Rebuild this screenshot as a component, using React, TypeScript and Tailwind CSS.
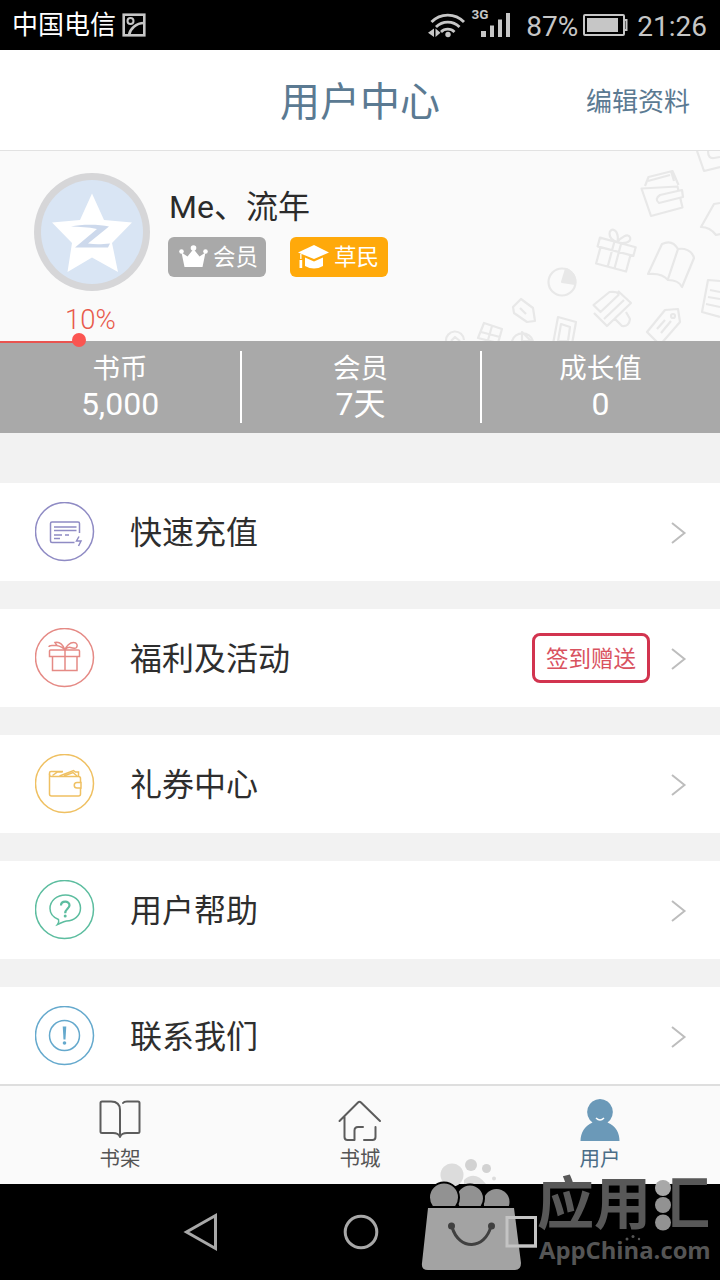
import type { ReactNode } from "react";

interface Stat {
  label: string;
  value: string;
}

interface MenuItem {
  title: string;
  icon: ReactNode;
  badge?: string;
}

const stats: Stat[] = [
  { label: "书币", value: "5,000" },
  { label: "会员", value: "7天" },
  { label: "成长值", value: "0" },
];

const CardIcon = () => (
  <svg width="60" height="60" viewBox="0 0 60 60" fill="none" stroke="#8f8bc4" strokeWidth="1.5">
    <circle cx="29.500" cy="29.500" r="29" />
    <path d="M44.500 31V21.500a1.500 1.500 0 0 0-1.500-1.500H17a1.500 1.500 0 0 0-1.500 1.500v17.500A1.500 1.500 0 0 0 17 40.500h22.500" />
    <path d="M19 25h22.500M19 28.500h22.500" />
    <path d="M19 33h8M30 33h4M19 36.500h6" strokeWidth="1.300" />
    <path d="M44 34.500l-2.500 4.500h4.500l-2.500 5" strokeWidth="1.500" />
  </svg>
);

const GiftIcon = () => (
  <svg width="60" height="60" viewBox="0 0 60 60" fill="none" stroke="#e58a85" strokeWidth="1.5">
    <circle cx="29.500" cy="29.500" r="29" />
    <path d="M15.500 22h28a1 1 0 0 1 1 1v5.500h-30V23a1 1 0 0 1 1-1zM17.500 28.500v14h24.500v-14M30 22v20.500" />
    <path d="M30 22c-2-5-5.500-8.500-10-7.500l2 3h-5c-2 0-3 .5-3 1.500M30 22c1-4 5-7.500 8.500-7.500 3.500 0 4.500 3 3 5-1.500 1.500-4.500.5-6 0-2-.5-4 .5-5.500 2.500M21.500 17.500c3 .5 6.500 2 8.500 4.500" />
  </svg>
);

const WalletIcon = () => (
  <svg width="60" height="60" viewBox="0 0 60 60" fill="none" stroke="#efc062" strokeWidth="1.5">
    <circle cx="29.500" cy="29.500" r="29" />
    <path d="M45.500 28.500V24.500a2 2 0 0 0-2-2H16.500a2 2 0 0 1-2-2V40a2 2 0 0 0 2 2h27a2 2 0 0 0 2-2v-6" />
    <path d="M46 28.500h-4a2.700 2.700 0 0 0 0 5.500h4zM14.500 21v-2a1.500 1.500 0 0 1 1.500-1.500h12M17.500 21.500l5-3.500h5M24.500 22l14-5.500 2 1.500h3v4M29 22l9-3.500 4 3.500" />
  </svg>
);

const HelpIcon = () => (
  <svg width="60" height="60" viewBox="0 0 60 60" fill="none" stroke="#5cbd9f" strokeWidth="1.5">
    <circle cx="29.500" cy="29.500" r="29" />
    <path d="M23.500 39.500c-5-2-8.500-5.500-8.500-11 0-8 7-13.500 15.500-13.500S45.500 20.500 45.500 28c0 8-6.500 12.500-14 13-3 .5-5.500 2-9 3.500 1.500-2 1.500-3.500 1-5z" />
    <path d="M26 25.500c0-5 8.500-5 8.500-.3 0 3.500-4.300 3.800-4.300 8" strokeWidth="2.200" />
    <circle cx="30.200" cy="36" r="1.500" fill="#5cbd9f" stroke="none" />
  </svg>
);

const ContactIcon = () => (
  <svg width="60" height="60" viewBox="0 0 60 60" fill="none" stroke="#65a9cd" strokeWidth="1.5">
    <circle cx="29.500" cy="29.500" r="29" />
    <circle cx="29.500" cy="29.500" r="15" />
    <path d="M27.700 20.500h3.600L30.500 33.500h-2z" fill="#65a9cd" stroke="none" />
    <circle cx="29.500" cy="37" r="1.800" fill="#65a9cd" stroke="none" />
  </svg>
);

const menu: MenuItem[] = [
  { title: "快速充值", icon: <CardIcon /> },
  { title: "福利及活动", icon: <GiftIcon />, badge: "签到赠送" },
  { title: "礼券中心", icon: <WalletIcon /> },
  { title: "用户帮助", icon: <HelpIcon /> },
  { title: "联系我们", icon: <ContactIcon /> },
];

const StatusBar = () => (
  <div className="flex h-[50px] shrink-0 items-center bg-black pl-3 pr-[13px] text-[28px] text-[#c6c6c6]">
    <span className="text-[26px] text-white">中国电信</span>
    <svg className="ml-[6px]" width="24" height="24" viewBox="0 0 24 24" fill="none" stroke="#c6c6c6" strokeWidth="2.600">
      <rect x="1.700" y="1.700" width="20.600" height="20.600" />
      <circle cx="8.500" cy="8" r="3" strokeWidth="2" />
      <path d="M7 22c1-6 7-12 15-12" />
    </svg>
    <div className="flex-1" />
    <svg width="84" height="40" viewBox="428 5 84 40" fill="none" stroke="#c6c6c6" strokeWidth="2.800">
      <path d="M431.500 22a22.500 22.500 0 0 1 32.500 0M436 27a16.500 16.500 0 0 1 23.500 0M441 32a9.500 9.500 0 0 1 13.500 0" />
      <circle cx="448" cy="34.500" r="2.700" fill="#c6c6c6" stroke="none" />
      <path d="M434 28.500v8.500l-6-4.250zM435.500 28.500v8.500l5-4.250z" fill="#c6c6c6" stroke="none" />
      <path d="M481 31h5v6h-5zM490 25.500h4v11.500h-4zM498 19.500h4V37h-4zM506 13h4v24h-4z" fill="#c6c6c6" stroke="none" />
      <text x="471.500" y="19" fontSize="13.500" fontWeight="700" fill="#c6c6c6" stroke="none">3G</text>
    </svg>
    <span className="ml-[14px] pt-[3px]">87%</span>
    <svg className="ml-[5px]" width="45" height="22" viewBox="0 0 45 22">
      <rect x="1" y="1" width="40" height="20" rx="1" fill="none" stroke="#c6c6c6" strokeWidth="2" />
      <rect x="4" y="4" width="31" height="14" fill="#c6c6c6" />
      <path d="M41 6h2.500v10H41" fill="none" stroke="#c6c6c6" strokeWidth="2" />
    </svg>
    <span className="ml-[9px] pt-[3px]">21:26</span>
  </div>
);

const Header = () => (
  <header className="grid h-[101px] shrink-0 grid-cols-3 items-center border-b border-[#e2e2e2] bg-white text-[#5b7a92]">
    <h1 className="col-start-2 pt-[6px] text-center text-[40px] leading-none">用户中心</h1>
    <button className="justify-self-end pr-[30px] pt-1 text-[26px] leading-none">编辑资料</button>
  </header>
);

// Faint scattered icons in the lower right corner of the profile area
const ProfilePattern = () => (
  <svg
    className="absolute right-0 top-0"
    width="290"
    height="190"
    viewBox="430 151 290 190"
    fill="none"
    stroke="#e8e8e8"
    strokeWidth="2.200"
    strokeLinejoin="round"
  >
    <path d="M697 151l7 20 16-4M708 151q0 8 6 7l6-1" />
    <path d="M641.500 188.500l9.500 27.500 31.500-8.500-5-21zM645 186l3.500-9 24-6 6 14M648 181l22-6M671 171l3 10" />
    <path d="M682 190l-22 5q-6 4-1 8l24-6z" fill="#fafafa" />
    <path d="M720 203l-6 1-13 23q9 0 15 8l4-1" />
    <g transform="rotate(15 615 251)">
      <path d="M597 242h37v9h-37zM600 251h31v17h-31zM612 242v26M619 242v26M615 242c-12-1-12-12-6-11 4 1 6 7 6 11 2-6 8-12 11-8 3 5-5 8-11 8" />
    </g>
    <path d="M662 244c6-3 12-2 16 5 6-1 14 1 16 9l-12 29c-3-6-8-7-14-7-4-5-10-7-20-6zM678 249l-10 30" />
    <circle cx="562" cy="282" r="13.500" />
    <path d="M562 282l4-13a13.500 13.500 0 0 1 9 15z" fill="#e8e8e8" />
    <path d="M720 281l-12-1-6 32 18 5M710 290l10 2M708 297l12 2M706 304l14 3" />
    <path d="M593.500 305l16-13q9-1 9 3l-18 17zM618 291l13 12-24 23-13-13M604 319l20-19M614 318l8 8q7 1 8-7l-4-7" />
    <path d="M678 309l2 13-20 23-13-13 18-22zM661 333l10-12M657 329l8-9" />
    <circle cx="673" cy="316" r="2" />
    <path d="M513 307l8-8 12 9 2 13-8 1-13-9zM520 308l6 6" />
    <path d="M558 317l18 5-4 22h-19zM561 324l9 3-2 14h-10z" />
    <path d="M484 323l18 6-4 14-20-5zM481 332l19 5M492 326l-4 14" />
    <path d="M446 341a9 9 0 0 1 18-1M451 341l4-4 5 4M512 341a11 11 0 0 1 21 0M522 332l9 9h-9z" />
  </svg>
);

const Avatar = () => (
  <svg className="mt-[22px] shrink-0" width="116" height="118" viewBox="34 173 116 118">
    <ellipse cx="92" cy="232" rx="58" ry="59" fill="#d6d6d8" />
    <ellipse cx="92" cy="232" rx="51" ry="52" fill="#d9e5f4" />
    <path
      d="M92 193.500l12 26.500 28 2.500-20 20.500 6 29-26-14.500L67.500 272l4.500-29-20-20.500 28-2.500z"
      fill="#fff"
      strokeLinejoin="round"
    />
    <path d="M71 226.500c10-2.500 28-2.500 38 0L88 243.500c7 1 13 1 22 0l-2 4H75l22-18.500c-9-2-17-2-26-2.500z" fill="#cdd9ec" />
  </svg>
);

const CrownIcon = () => (
  <svg width="29" height="24" viewBox="0 0 29 24" fill="#fff">
    <path d="M2.500 7.500l6 4L14.500 4l6 7.500 6-4L23.500 22h-18z" />
    <circle cx="2.500" cy="6.500" r="2.300" />
    <circle cx="14.500" cy="3" r="2.800" />
    <circle cx="26.500" cy="6.500" r="2.300" />
  </svg>
);

const CapIcon = () => (
  <svg width="31" height="24" viewBox="0 0 31 24" fill="#fff">
    <path d="M16 0l15 7.500L16 14 0 7.500z" />
    <path d="M7 12.500l9 4 9-4V21q-9 5-18 0zM2.200 9h1.300v5h-1.300zM1.500 15h2.700v8H1.500z" />
  </svg>
);

const Profile = () => (
  <section className="relative flex h-[190px] shrink-0 bg-[#fafafa] pl-[34px]">
    <ProfilePattern />
    <Avatar />
    <div className="ml-[18px] mt-[38px]">
      <div className="pl-px text-[32px] leading-[36px] text-[#2b2b2b]">Me、流年</div>
      <div className="mt-3 flex gap-6 text-[22.5px] leading-none text-white">
        <span className="flex h-10 w-[98px] items-center justify-end gap-[5px] rounded-md bg-[#a9a9a9] pr-2">
          <CrownIcon />
          会员
        </span>
        <span className="flex h-10 w-[98px] items-center justify-end gap-[5px] rounded-md bg-[#ffa90a] pr-[9px]">
          <CapIcon />
          草民
        </span>
      </div>
    </div>
    <span className="absolute left-[65px] top-[153px] text-[27.5px] font-light leading-[32px] text-[#e85a4c]">10%</span>
    <div className="absolute left-0 top-[190px] z-10 h-[2px] w-[79px] bg-[#ea5450]" />
    <div className="absolute left-[72px] top-[182px] z-10 size-[14px] rounded-full bg-[#fb5551]" />
  </section>
);

const StatsBar = () => (
  <section className="flex h-[92px] shrink-0 items-stretch bg-[#a9a9a9] py-[10px] text-white">
    {stats.map((stat, index) => (
      <div
        key={stat.label}
        className={`flex flex-col items-center pt-px ${index < 2 ? "border-r-2 border-white" : ""} ${
          index === 0 ? "w-[242px]" : index === 1 ? "w-[240px] pr-px" : "w-[238px] pr-px"
        }`}
      >
        <span className="text-[27.5px] leading-[34px]">{stat.label}</span>
        <span className="text-[32px] leading-[36px]">{stat.value}</span>
      </div>
    ))}
  </section>
);

const MenuRow = ({ item }: { item: MenuItem }) => (
  <div className="flex h-[98px] shrink-0 items-center bg-white pl-[35px] pr-[33px]">
    {item.icon}
    <span className="ml-[35px] flex-1 pt-[2px] text-[32px] leading-none text-[#2e2e2e]">{item.title}</span>
    {item.badge && (
      <span className="mr-5 flex h-[50px] w-[118px] items-center justify-center rounded-lg border-[3px] border-[#d2344f] pt-[2px] text-[22.5px] leading-none text-[#d9525f]">
        {item.badge}
      </span>
    )}
    <svg className="mt-[2px]" width="17" height="24" viewBox="0 0 17 24" fill="none" stroke="#bdbdbd" strokeWidth="2">
      <path d="M2 2l12.500 10L2 22" />
    </svg>
  </div>
);

const TabBar = () => (
  <nav className="grid h-[100px] shrink-0 grid-cols-3 border-t-2 border-[#dedede] bg-[#fafafa] pt-[13px] text-[20.5px] leading-none text-[#555]">
    <div className="flex flex-col items-center gap-2">
      <svg width="44" height="42" viewBox="98 1099 44 42" fill="none" stroke="#5c5c5c" strokeWidth="2" strokeLinecap="round" strokeLinejoin="round">
        <path d="M120 1137v-27c0-6-4-8.500-9-8.500h-9a1.500 1.500 0 0 0-1.500 1.500v28.500a1.500 1.500 0 0 0 1.500 1.500h11c4 0 6 1 7 4 1-3 3-4 7-4h11a1.500 1.500 0 0 0 1.500-1.500V1103a1.500 1.500 0 0 0-1.500-1.500h-11q-3 0-4 1.500" />
      </svg>
      书架
    </div>
    <div className="flex flex-col items-center gap-2">
      <svg width="44" height="42" viewBox="338 1099 44 42" fill="none" stroke="#5c5c5c" strokeWidth="2" strokeLinecap="round" strokeLinejoin="round">
        <path d="M339.500 1121l18.500-18.500q1.500-1.500 3 0L380 1121M344.500 1117v20a3 3 0 0 0 3 3h7v-9.500q0-3.500 3.500-3.500h5M375.500 1127v10a3 3 0 0 1-3 3H364" />
      </svg>
      书城
    </div>
    <div className="flex flex-col items-center gap-2 text-[#4b6d87]">
      <svg width="44" height="42" viewBox="578 1099 44 42" fill="#6b99b8">
        <path d="M600 1099a13 13 0 0 1 7.500 23.500C616 1126 619.500 1133 619.500 1141h-39c0-8 4-15 12-18.500A13 13 0 0 1 600 1099z" />
        <path d="M596 1118q4 4 8 0" fill="none" stroke="#fff" strokeWidth="1.500" />
      </svg>
      用户
    </div>
  </nav>
);

const NavBar = () => (
  <div className="h-[96px] shrink-0 bg-black">
    <svg width="720" height="96" viewBox="0 1184 720 96" fill="none" stroke="#a8a8a8" strokeWidth="3">
      <path d="M215.500 1215.500v33L186.500 1232z" />
      <circle cx="361" cy="1232" r="15.800" />
      <path d="M507 1217.500h28.500v28.500H507z" />
    </svg>
  </div>
);

const Watermark = () => (
  <div className="absolute bottom-0 right-0 h-[124px] w-[300px]">
    <svg className="absolute inset-0" width="300" height="124" viewBox="420 1156 300 124">
      <clipPath id="bag-top">
        <path d="M420 1156h300v50H420z" />
      </clipPath>
      <g fill="#dcdcdc">
        <circle cx="452" cy="1175" r="11.500" />
        <circle cx="471" cy="1165" r="6" fill="#d2d2d2" />
        <circle cx="486.500" cy="1168.500" r="4.500" fill="#d2d2d2" />
        <circle cx="494" cy="1178.500" r="2" />
        <path d="M464 1180q11-10 22 4h-22z" />
      </g>
      <g fill="#929292" clipPath="url(#bag-top)">
        <circle cx="496.500" cy="1202" r="13" />
        <circle cx="470" cy="1198.500" r="14" stroke="#000" strokeWidth="2" />
        <circle cx="444" cy="1197.500" r="15" stroke="#000" strokeWidth="2" />
      </g>
      <path d="M428 1208h86l7 55q0 7-6 7h-87q-7 0-6-7z" fill="#a3a3a3" />
      <path d="M507 1217.500h28.500v28.500H507z" fill="none" stroke="#c4c4c4" strokeWidth="3" />
      <path d="M452 1227c7 24 33 23 39-1" fill="none" stroke="#404040" strokeWidth="3" />
      <circle cx="451.500" cy="1226" r="3.500" fill="#404040" />
      <circle cx="491.500" cy="1226" r="3.500" fill="#404040" />
      <g fill="#929292">
        <circle cx="663" cy="1188" r="8" fill="#a8a8a8" />
        <circle cx="663" cy="1205" r="8" />
        <circle cx="663" cy="1222.500" r="8" />
      </g>
      <g fill="#555">
        <circle cx="627" cy="1239" r="1.500" />
        <circle cx="633" cy="1236.500" r="1.500" />
        <circle cx="639" cy="1239" r="1.200" />
      </g>
    </svg>
    <div className="absolute left-[117px] top-[20px] flex whitespace-nowrap text-[57px] font-bold leading-[58px] text-[#585858]">
      <span>应用</span>
      {/* the water radical is hidden, three dots take its place */}
      <span className="ml-[2px] [clip-path:inset(0_0_0_18px)]">汇</span>
    </div>
    <div className="absolute left-[119px] top-[81px] font-['Open_Sans'] text-[23.8px] font-bold leading-[26px] text-[#555]">
      AppChina.com
    </div>
  </div>
);

const App = () => {
  return (
    <div className="relative flex h-[1280px] w-[720px] flex-col overflow-hidden bg-[#f2f2f2] font-[Roboto,'Noto_Sans_CJK_SC',sans-serif]">
      <StatusBar />
      <Header />
      <Profile />
      <StatsBar />
      <main className="flex min-h-0 flex-1 flex-col gap-7 overflow-hidden pt-[50px]">
        {menu.map((item) => (
          <MenuRow key={item.title} item={item} />
        ))}
      </main>
      <TabBar />
      <NavBar />
      <Watermark />
    </div>
  );
};

export default App;
